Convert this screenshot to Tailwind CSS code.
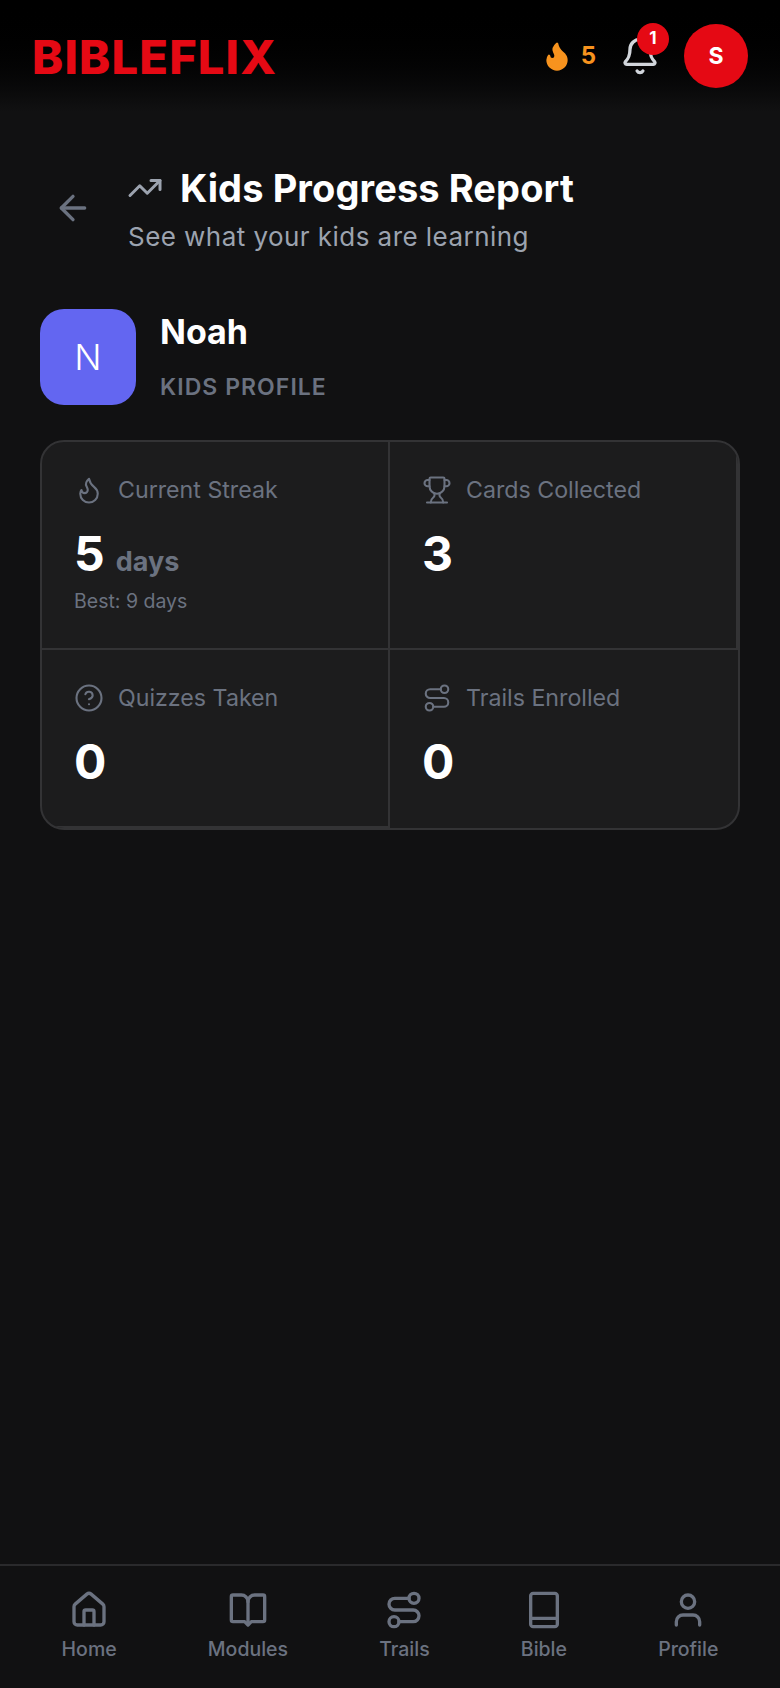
<!DOCTYPE html>
<html lang="en">
<head>
<meta charset="utf-8">
<title>Bibleflix</title>
<script src="https://cdn.jsdelivr.net/npm/@tailwindcss/browser@4"></script>
</head>
<body class="bg-[#111112] font-['Inter',sans-serif]">
<div class="flex h-[1688px] w-[780px] flex-col overflow-hidden bg-[#111112]">
  <header class="flex h-[112px] shrink-0 items-center justify-between bg-gradient-to-b from-black to-[#111112] pl-[32px] pr-[32px]">
    <span class="text-[47px] leading-none font-extrabold tracking-[1.2px] text-[#e50914]">BIBLEFLIX</span>
    <div class="flex items-center">
      <svg class="h-[32px] w-[32px] text-[#f7931e]" viewBox="0 0 24 24" fill="currentColor" stroke="currentColor" stroke-width="2" stroke-linecap="round" stroke-linejoin="round"><path d="M8.5 14.5A2.5 2.5 0 0 0 11 12c0-1.38-.5-2-1-3-1.072-2.143-.224-4.054 2-6 .5 2.5 2 4.9 4 6.5 2 1.6 3 3.5 3 5.5a7 7 0 1 1-14 0c0-1.153.433-2.294 1-3a2.5 2.5 0 0 0 2.5 2.5z"/></svg>
      <span class="ml-[8px] text-[24px] leading-none font-bold text-[#f7931e]">5</span>
      <div class="relative ml-[24px] h-[40px] w-[40px]">
        <svg class="h-[40px] w-[40px] text-[#d1d5db]" viewBox="0 0 24 24" fill="none" stroke="currentColor" stroke-width="2" stroke-linecap="round" stroke-linejoin="round"><path d="M10.268 21a2 2 0 0 0 3.464 0"/><path d="M3.262 15.326A1 1 0 0 0 4 17h16a1 1 0 0 0 .74-1.673C19.41 13.956 18 12.499 18 8A6 6 0 0 0 6 8c0 4.499-1.411 5.956-2.738 7.326"/></svg>
        <span class="absolute -top-[13px] -right-[9px] flex h-[32px] w-[32px] items-center justify-center rounded-full bg-[#e50914] text-[17px] font-bold text-white">1</span>
      </div>
      <div class="ml-[24px] flex h-[64px] w-[64px] items-center justify-center rounded-full bg-[#e50914] text-[23px] font-bold text-white">S</div>
    </div>
  </header>

  <main class="flex-1 px-[40px]">
    <div class="mt-[52px] flex items-center gap-[35px] pl-[13px]">
      <svg class="-mt-[4px] h-[40px] w-[40px] text-[#6b7280]" viewBox="0 0 24 24" fill="none" stroke="currentColor" stroke-width="2" stroke-linecap="round" stroke-linejoin="round"><path d="m12 19-7-7 7-7"/><path d="M19 12H5"/></svg>
      <div>
        <div class="-ml-[1px] flex items-center gap-[17px]">
          <svg class="h-[36px] w-[36px] shrink-0 text-[#9ca3af]" viewBox="0 0 24 24" fill="none" stroke="currentColor" stroke-width="2" stroke-linecap="round" stroke-linejoin="round"><polyline points="22 7 13.5 15.5 8.5 10.5 2 17"/><polyline points="16 7 22 7 22 13"/></svg>
          <h1 class="text-[38px] leading-[48px] font-bold tracking-[0.1px] text-white">Kids Progress Report</h1>
        </div>
        <p class="mt-[7px] text-[26px] leading-[36px] tracking-[0.45px] text-[#9ca3af]">See what your kids are learning</p>
      </div>
    </div>

    <div class="mt-[53px] flex items-center gap-[24px]">
      <div class="flex h-[96px] w-[96px] items-center justify-center rounded-[24px] bg-[#6366f1] text-[36px] font-light text-white">N</div>
      <div class="pb-[2px]">
        <div class="text-[34px] leading-[48px] font-bold tracking-[0px] text-white">Noah</div>
        <div class="mt-[15px] text-[23px] leading-[32px] font-semibold tracking-[1.05px] text-[#6b7280]">KIDS PROFILE</div>
      </div>
    </div>

    <div class="mt-[35px] grid h-[390px] grid-cols-2 grid-rows-[208px_1fr] overflow-hidden rounded-[24px] border-2 border-[#333335] bg-[#1c1c1d]">
      <div class="border-r-2 border-b-2 border-[#333335] pt-[32px] pl-[32px]">
        <div class="flex h-[32px] items-center gap-[14px] text-[23.2px] text-[#6b7280]">
          <svg class="h-[30px] w-[30px]" viewBox="0 0 24 24" fill="none" stroke="currentColor" stroke-width="1.67" stroke-linecap="round" stroke-linejoin="round"><path d="M8.5 14.5A2.5 2.5 0 0 0 11 12c0-1.38-.5-2-1-3-1.072-2.143-.224-4.054 2-6 .5 2.5 2 4.9 4 6.5 2 1.6 3 3.5 3 5.5a7 7 0 1 1-14 0c0-1.153.433-2.294 1-3a2.5 2.5 0 0 0 2.5 2.5z"/></svg>
          <span>Current Streak</span>
        </div>
        <div class="mt-[18px] flex items-baseline gap-[11px]">
          <span class="text-[48px] leading-[60px] font-bold text-white">5</span>
          <span class="text-[27px] font-bold text-[#6b7280]">days</span>
        </div>
        <div class="mt-[3px] text-[19.5px] leading-[28px] text-[#6b7280]">Best: 9 days</div>
      </div>
      <div class="border-r-2 border-b-2 border-[#333335] pt-[32px] pl-[32px]">
        <div class="flex h-[32px] items-center gap-[14px] text-[23.2px] text-[#6b7280]">
          <svg class="h-[30px] w-[30px]" viewBox="0 0 24 24" fill="none" stroke="currentColor" stroke-width="1.67" stroke-linecap="round" stroke-linejoin="round"><path d="M10 14.66v1.626a2 2 0 0 1-.976 1.696A5 5 0 0 0 7 21.978"/><path d="M14 14.66v1.626a2 2 0 0 0 .976 1.696A5 5 0 0 1 17 21.978"/><path d="M18 9h1.5a1 1 0 0 0 0-5H18"/><path d="M18 9a6 6 0 0 1-12 0V3a1 1 0 0 1 1-1h10a1 1 0 0 1 1 1z"/><path d="M6 9H4.5a1 1 0 0 1 0-5H6"/><path d="M4 22h16"/></svg>
          <span>Cards Collected</span>
        </div>
        <div class="mt-[18px] text-[48px] leading-[60px] font-bold text-white">3</div>
      </div>
      <div class="border-r-2 border-b-2 border-[#333335] pt-[32px] pl-[32px]">
        <div class="flex h-[32px] items-center gap-[14px] text-[23.2px] text-[#6b7280]">
          <svg class="h-[30px] w-[30px]" viewBox="0 0 24 24" fill="none" stroke="currentColor" stroke-width="1.67" stroke-linecap="round" stroke-linejoin="round"><circle cx="12" cy="12" r="10"/><path d="M9.09 9a3 3 0 0 1 5.83 1c0 2-3 3-3 3"/><path d="M12 17h.01"/></svg>
          <span>Quizzes Taken</span>
        </div>
        <div class="mt-[18px] text-[48px] leading-[60px] font-bold text-white">0</div>
      </div>
      <div class="pt-[32px] pl-[32px]">
        <div class="flex h-[32px] items-center gap-[14px] text-[23.2px] text-[#6b7280]">
          <svg class="h-[30px] w-[30px]" viewBox="0 0 24 24" fill="none" stroke="currentColor" stroke-width="1.67" stroke-linecap="round" stroke-linejoin="round"><circle cx="6" cy="19" r="3"/><path d="M9 19h8.5a3.5 3.5 0 0 0 0-7h-11a3.5 3.5 0 0 1 0-7H15"/><circle cx="18" cy="5" r="3"/></svg>
          <span>Trails Enrolled</span>
        </div>
        <div class="mt-[18px] text-[48px] leading-[60px] font-bold text-white">0</div>
      </div>
    </div>
  </main>

  <nav class="flex h-[124px] shrink-0 items-start justify-around border-t-2 border-[#2a2a2c] bg-[#111112] px-[16px] pt-[24px] text-[#6b7280]">
    <div class="flex flex-col items-center">
      <svg class="h-[40px] w-[40px]" viewBox="0 0 24 24" fill="none" stroke="currentColor" stroke-width="2" stroke-linecap="round" stroke-linejoin="round"><path d="M15 21v-8a1 1 0 0 0-1-1h-4a1 1 0 0 0-1 1v8"/><path d="M3 10a2 2 0 0 1 .709-1.528l7-6a2 2 0 0 1 2.582 0l7 6A2 2 0 0 1 21 10v9a2 2 0 0 1-2 2H5a2 2 0 0 1-2-2z"/></svg>
      <span class="mt-[5px] text-[19.5px] leading-[28px] font-medium">Home</span>
    </div>
    <div class="flex flex-col items-center">
      <svg class="h-[40px] w-[40px]" viewBox="0 0 24 24" fill="none" stroke="currentColor" stroke-width="2" stroke-linecap="round" stroke-linejoin="round"><path d="M12 7v13"/><path d="M3 3h5a4 4 0 0 1 4 4 4 4 0 0 1 4-4h5a1 1 0 0 1 1 1v14a1 1 0 0 1-1 1h-7l-2 2-2-2H3a1 1 0 0 1-1-1V4a1 1 0 0 1 1-1z"/></svg>
      <span class="mt-[5px] text-[19.5px] leading-[28px] font-medium">Modules</span>
    </div>
    <div class="flex flex-col items-center">
      <svg class="h-[40px] w-[40px]" viewBox="0 0 24 24" fill="none" stroke="currentColor" stroke-width="2" stroke-linecap="round" stroke-linejoin="round"><circle cx="6" cy="19" r="3"/><path d="M9 19h8.5a3.5 3.5 0 0 0 0-7h-11a3.5 3.5 0 0 1 0-7H15"/><circle cx="18" cy="5" r="3"/></svg>
      <span class="mt-[5px] text-[19.5px] leading-[28px] font-medium">Trails</span>
    </div>
    <div class="flex flex-col items-center">
      <svg class="h-[40px] w-[40px]" viewBox="0 0 24 24" fill="none" stroke="currentColor" stroke-width="2" stroke-linecap="round" stroke-linejoin="round"><rect x="4" y="2" width="16" height="20" rx="1.5"/><path d="M4 17h16"/></svg>
      <span class="mt-[5px] text-[19.5px] leading-[28px] font-medium">Bible</span>
    </div>
    <div class="flex flex-col items-center">
      <svg class="h-[40px] w-[40px]" viewBox="0 0 24 24" fill="none" stroke="currentColor" stroke-width="2" stroke-linecap="round" stroke-linejoin="round"><path d="M19 21v-2a4 4 0 0 0-4-4H9a4 4 0 0 0-4 4v2"/><circle cx="12" cy="7" r="4"/></svg>
      <span class="mt-[5px] text-[19.5px] leading-[28px] font-medium">Profile</span>
    </div>
  </nav>
</div>
</body>
</html>
